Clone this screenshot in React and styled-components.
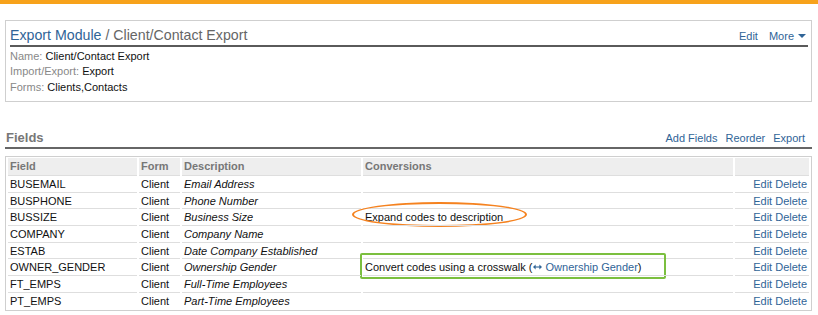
import React from "react";
import styled, { createGlobalStyle } from "styled-components";

const Global = createGlobalStyle`
  html, body { margin: 0; padding: 0; background: #fff; }
  body { font-family: "Liberation Sans", Arial, sans-serif; font-size: 11px; color: #111; }
`;

const TopBar = styled.div`
  height: 4px;
  background: #f7a21b;
`;

const Page = styled.div`
  padding: 16px 6px 0 5px;
  width: 807px;
`;

const Panel = styled.section`
  border: 1px solid #cfcfcf;
  padding: 5px 4px 6px 4px;
`;

const PanelHead = styled.div`
  display: flex;
  align-items: baseline;
  justify-content: space-between;
  line-height: 18px;
  border-bottom: 2px solid #5a5a5a;
  margin-right: -1px;
`;

const Title = styled.h1`
  margin: 0;
  font-size: 14.2px;
  font-weight: normal;
  color: #666;
`;

const Link = styled.a`
  color: #2f6497;
  text-decoration: none;
  cursor: pointer;
`;

const Actions = styled.div`
  display: flex;
  align-items: baseline;
  gap: ${(p) => p.$gap || 11}px;
  font-size: 11px;
  padding-right: ${(p) => p.$pr || 0}px;
`;

const Caret = styled.span`
  display: inline-block;
  width: 0;
  height: 0;
  margin-left: 4px;
  border-left: 4px solid transparent;
  border-right: 4px solid transparent;
  border-top: 4px solid #2f6497;
  vertical-align: 2px;
`;

const InfoList = styled.div`
  padding-top: 2px;
`;

const InfoRow = styled.div`
  line-height: 15.3px;
`;

const Label = styled.span`
  color: #888;
`;

const SectionHead = styled.div`
  margin-top: 28px;
  display: flex;
  align-items: baseline;
  justify-content: space-between;
  border-bottom: 2px solid #666;
  padding-bottom: 1px;
`;

const SectionTitle = styled.h2`
  margin: 0 0 0 1px;
  font-size: 13px;
  line-height: 16px;
  font-weight: bold;
  color: #777;
`;

const Table = styled.table`
  margin-top: 7px;
  width: 100%;
  table-layout: fixed;
  border: 1px solid #cfcfcf;
  border-spacing: 2px 0;
  padding: 1px 0;
`;

const Th = styled.th`
  background: #eeeeee;
  color: #777;
  font-weight: bold;
  text-align: left;
  padding: 1px 2px;
  line-height: 15px;
`;

const Td = styled.td`
  border-top: 1px solid #dedede;
  padding: 1px 2px 0;
  line-height: 14.7px;
  white-space: nowrap;
  position: relative;
  color: #111;
  font-style: ${(p) => (p.$italic ? "italic" : "normal")};
  text-align: ${(p) => (p.$right ? "right" : "left")};
`;

const Ellipse = styled.span`
  position: absolute;
  left: -11px;
  top: -7px;
  width: 175px;
  height: 25px;
  box-sizing: border-box;
  border: 2.5px solid #f5821f;
  border-radius: 50%;
  pointer-events: none;
`;

const Box = styled.span`
  position: absolute;
  left: -3px;
  top: -6px;
  width: 306px;
  height: 26px;
  box-sizing: border-box;
  border: 2.5px solid #7bbf3f;
  border-radius: 2px;
  pointer-events: none;
`;

const ArrowIcon = styled.svg`
  width: 9px;
  height: 6px;
  margin-right: 4px;
  vertical-align: 1px;
`;

const rows = [
  ["BUSEMAIL", "Client", "Email Address", null],
  ["BUSPHONE", "Client", "Phone Number", null],
  ["BUSSIZE", "Client", "Business Size", "expand"],
  ["COMPANY", "Client", "Company Name", null],
  ["ESTAB", "Client", "Date Company Established", null],
  ["OWNER_GENDER", "Client", "Ownership Gender", "crosswalk"],
  ["FT_EMPS", "Client", "Full-Time Employees", null],
  ["PT_EMPS", "Client", "Part-Time Employees", null],
];

function Conversion({ kind }) {
  if (kind === "expand")
    return (
      <>
        Expand codes to description
        <Ellipse />
      </>
    );
  if (kind === "crosswalk")
    return (
      <>
        Convert codes using a crosswalk (
        <Link>
          <ArrowIcon viewBox="0 0 9 6" aria-label="↔">
            <path d="M1.5 3h6" stroke="#2f6497" strokeWidth="1.1" />
            <path d="M0 3l2.6-2.4v4.8z" fill="#2f6497" />
            <path d="M9 3L6.4 0.6v4.8z" fill="#2f6497" />
          </ArrowIcon>
          Ownership Gender
        </Link>
        )
        <Box />
      </>
    );
  return null;
}

export default function App() {
  return (
    <>
      <Global />
      <TopBar />
      <Page>
        <Panel>
          <PanelHead>
            <Title>
              <Link>Export Module</Link> / Client/Contact Export
            </Title>
            <Actions $pr={2}>
              <Link>Edit</Link>
              <Link>
                More
                <Caret />
              </Link>
            </Actions>
          </PanelHead>
          <InfoList>
            <InfoRow>
              <Label>Name:</Label> Client/Contact Export
            </InfoRow>
            <InfoRow>
              <Label>Import/Export:</Label> Export
            </InfoRow>
            <InfoRow>
              <Label>Forms:</Label> Clients,Contacts
            </InfoRow>
          </InfoList>
        </Panel>

        <SectionHead>
          <SectionTitle>Fields</SectionTitle>
          <Actions $gap={8} $pr={7}>
            <Link>Add Fields</Link>
            <Link>Reorder</Link>
            <Link>Export</Link>
          </Actions>
        </SectionHead>

        <Table>
          <colgroup>
            <col style={{ width: 129 }} />
            <col style={{ width: 41 }} />
            <col style={{ width: 179 }} />
            <col style={{ width: 370 }} />
            <col style={{ width: 74 }} />
          </colgroup>
          <thead>
            <tr>
              <Th>Field</Th>
              <Th>Form</Th>
              <Th>Description</Th>
              <Th>Conversions</Th>
              <Th />
            </tr>
          </thead>
          <tbody>
            {rows.map(([field, form, desc, conv]) => (
              <tr key={field}>
                <Td>{field}</Td>
                <Td>{form}</Td>
                <Td $italic>{desc}</Td>
                <Td>
                  <Conversion kind={conv} />
                </Td>
                <Td $right>
                  <Link>Edit</Link> <Link>Delete</Link>
                </Td>
              </tr>
            ))}
          </tbody>
        </Table>
      </Page>
    </>
  );
}
